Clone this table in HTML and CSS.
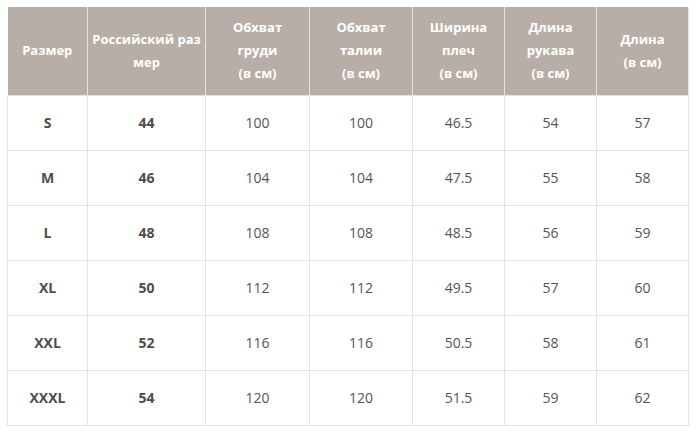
FILE: index.html
```html
<!DOCTYPE html>
<html lang="ru">
<head>
<meta charset="utf-8">
<link rel="stylesheet" href="styles.css">
</head>
<body>
<table class="size-table">
  <colgroup>
    <col class="c1"><col class="c2"><col class="c3"><col class="c4"><col class="c5"><col class="c6"><col class="c7">
  </colgroup>
  <thead>
    <tr>
      <th>Размер</th>
      <th>Российский раз мер</th>
      <th>Обхват<br>груди<br>(в см)</th>
      <th>Обхват<br>талии<br>(в см)</th>
      <th>Ширина<br>плеч<br>(в см)</th>
      <th>Длина<br>рукава<br>(в см)</th>
      <th>Длина<br>(в см)</th>
    </tr>
  </thead>
  <tbody>
    <tr><td class="b">S</td><td class="b">44</td><td>100</td><td>100</td><td>46.5</td><td>54</td><td>57</td></tr>
    <tr><td class="b">M</td><td class="b">46</td><td>104</td><td>104</td><td>47.5</td><td>55</td><td>58</td></tr>
    <tr><td class="b">L</td><td class="b">48</td><td>108</td><td>108</td><td>48.5</td><td>56</td><td>59</td></tr>
    <tr><td class="b">XL</td><td class="b">50</td><td>112</td><td>112</td><td>49.5</td><td>57</td><td>60</td></tr>
    <tr><td class="b">XXL</td><td class="b">52</td><td>116</td><td>116</td><td>50.5</td><td>58</td><td>61</td></tr>
    <tr><td class="b">XXXL</td><td class="b">54</td><td>120</td><td>120</td><td>51.5</td><td>59</td><td>62</td></tr>
  </tbody>
</table>
</body>
</html>
```
FILE: styles.css
```css
html, body {
  margin: 0;
  padding: 0;
  background: #ffffff;
}
body {
  padding: 7px 0 0 7px;
  font-family: "Open Sans", "Noto Sans", sans-serif;
}
.size-table {
  border-collapse: collapse;
  table-layout: fixed;
  width: 682px;
}
.c1 { width: 80px; }
.c2 { width: 118px; }
.c3 { width: 104px; }
.c4 { width: 103px; }
.c5 { width: 92px; }
.c6 { width: 92px; }
.c7 { width: 92px; }
.size-table th {
  background: #b8aea8;
  color: #ffffff;
  font-weight: 700;
  font-size: 13px;
  line-height: 23px;
  height: 88px;
  padding: 0 2px;
  box-sizing: border-box;
  border: 1px solid #e4e4e4;
  border-top: none;
  text-align: center;
  vertical-align: middle;
}
.size-table th:first-child { border-left: none; }
.size-table td {
  height: 55px;
  box-sizing: border-box;
  padding: 0;
  border: 1px solid #e4e4e4;
  text-align: center;
  vertical-align: middle;
  font-size: 14px;
  color: #555555;
}
.size-table td.b {
  font-weight: 700;
  color: #4d4d4d;
}
```
